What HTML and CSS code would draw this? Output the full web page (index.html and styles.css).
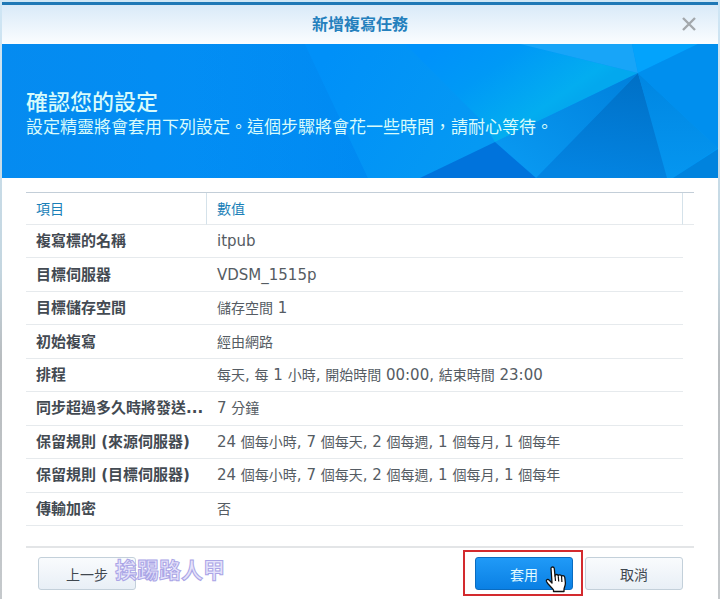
FILE: index.html
```html
<!DOCTYPE html>
<html lang="zh-Hant">
<head>
  <meta charset="UTF-8" />
  <meta name="viewport" content="width=device-width, initial-scale=1" />
  <title>新增複寫任務</title>
  <link rel="stylesheet" href="styles.css">
</head>
<body>
  <div class="dialog">
    <header class="titlebar">
      <h1>新增複寫任務</h1>
      <button type="button" class="close" aria-label="關閉">
        <svg width="16" height="14" viewBox="0 0 16 14">
          <path d="M2 1l12 12M14 1L2 13" fill="none" stroke="#a3a8ac" stroke-width="2.4" />
        </svg>
      </button>
    </header>

    <section class="banner">
      <svg class="facets" viewBox="0 0 716 134" preserveAspectRatio="none" aria-hidden="true">
        <defs>
          <linearGradient id="base" x1="0" y1="0" x2="1" y2="0">
            <stop offset="0" stop-color="#058bf0" />
            <stop offset="0.55" stop-color="#0090f8" />
            <stop offset="1" stop-color="#0099f7" />
          </linearGradient>
          <linearGradient id="shade" x1="0" y1="0" x2="1" y2="0">
            <stop offset="0" stop-color="#007ee6" stop-opacity="0" />
            <stop offset="1" stop-color="#007ee6" stop-opacity="0.3" />
          </linearGradient>
          <linearGradient id="cyan" gradientUnits="userSpaceOnUse" x1="440" y1="0" x2="510" y2="100">
            <stop offset="0" stop-color="#0092fa" />
            <stop offset="0.4" stop-color="#0099f6" />
            <stop offset="0.9" stop-color="#03adf0" />
            <stop offset="1" stop-color="#03a8ee" />
          </linearGradient>
          <linearGradient id="blue" gradientUnits="userSpaceOnUse" x1="320" y1="20" x2="470" y2="110">
            <stop offset="0" stop-color="#0090f8" />
            <stop offset="1" stop-color="#0599f3" />
          </linearGradient>
          <linearGradient id="dark" x1="0.7" y1="0" x2="0.5" y2="1">
            <stop offset="0" stop-color="#0070c6" />
            <stop offset="1" stop-color="#0384e2" />
          </linearGradient>
          <linearGradient id="mid" x1="1" y1="0" x2="0" y2="1">
            <stop offset="0" stop-color="#0080dc" />
            <stop offset="1" stop-color="#0a9cf4" />
          </linearGradient>
          <linearGradient id="right" x1="0" y1="0" x2="0" y2="1">
            <stop offset="0" stop-color="#0086e2" />
            <stop offset="1" stop-color="#0596f0" />
          </linearGradient>
        </defs>
        <path fill="url(#base)" d="M0 0h716v134H0z" />
        <path fill="url(#shade)" d="M190 0h113l63 134H190z" />
        <path fill="url(#blue)" d="M303 0h117l90 95-92 39h-52z" />
        <path fill="url(#cyan)" d="M403 0h115l118 29-143 69-12-20z" />
        <path fill="#18a5f8" d="M518 0h112l6 29z" />
        <path fill="#03a3fc" d="M630 0h66l-60 29z" />
        <path fill="url(#mid)" d="M636 29L493 98l41 36z" />
        <path fill="#0073dc" d="M418 134l75-36 41 36z" />
        <path fill="url(#dark)" d="M636 29L534 134h133z" />
        <path fill="url(#right)" d="M636 29l80 75-45 30h-6z" />
        <path fill="#008fee" d="M636 29l60-29h20v104z" />
        <path fill="#0083de" d="M671 134l45-29v29z" />
      </svg>
      <h2>確認您的設定</h2>
      <p>設定精靈將會套用下列設定。這個步驟將會花一些時間，請耐心等待。</p>
    </section>

    <main class="content">
      <table>
        <thead>
          <tr>
            <th class="name" scope="col">項目</th>
            <th scope="col">數值</th>
            <td class="spacer"></td>
          </tr>
        </thead>
        <tbody>
          <tr><th scope="row">複寫標的名稱</th><td>itpub</td></tr>
          <tr><th scope="row">目標伺服器</th><td>VDSM_1515p</td></tr>
          <tr><th scope="row">目標儲存空間</th><td><span>儲存空間</span> 1</td></tr>
          <tr><th scope="row">初始複寫</th><td><span>經由網路</span></td></tr>
          <tr><th scope="row">排程</th><td><span>每天</span>, <span>每</span> 1 <span>小時</span>, <span>開始時間</span> 00:00, <span>結束時間</span> 23:00</td></tr>
          <tr><th scope="row">同步超過多久時將發送...</th><td>7 <span>分鐘</span></td></tr>
          <tr><th scope="row">保留規則 (來源伺服器)</th><td>24 <span>個每小時</span>, 7 <span>個每天</span>, 2 <span>個每週</span>, 1 <span>個每月</span>, 1 <span>個每年</span></td></tr>
          <tr><th scope="row">保留規則 (目標伺服器)</th><td>24 <span>個每小時</span>, 7 <span>個每天</span>, 2 <span>個每週</span>, 1 <span>個每月</span>, 1 <span>個每年</span></td></tr>
          <tr><th scope="row">傳輸加密</th><td><span>否</span></td></tr>
        </tbody>
      </table>
    </main>

    <footer class="actions">
      <div class="back">
        <button type="button" class="btn">上一步</button>
        <span class="watermark">挨踢路人甲</span>
      </div>
      <div class="apply">
        <button type="button" class="btn primary">套用</button>
        <svg class="pointer" width="24" height="27" viewBox="0 0 24 27" aria-hidden="true">
          <path d="M7 2.5C7 .5 10 .5 10.300 2.500L11 10c0-2 3-2 3.300 0 0-1.500 3-1.500 3.300.5 0-1.200 3-1.200 3.200 1l.6 5.500c.1 3-1.400 4.500-1.400 6.500v2H9.500v-1.500C8 21.500 4 19 2.500 15.500c-.8-2 1.500-2.800 2.800-1.300L8 17z" fill="#fff" stroke="#111" stroke-width="1.300" stroke-linejoin="round" />
          <path d="M11 9.500l.5 5.500M14.300 10.500l.4 5M17.600 11l.3 5" fill="none" stroke="#111" stroke-width="1.200" />
        </svg>
      </div>
      <button type="button" class="btn">取消</button>
    </footer>
  </div>
</body>
</html>
```
FILE: styles.css
```css
* {
  margin: 0;
  padding: 0;
  box-sizing: border-box;
}

body {
  min-height: 100vh;
  padding: 2px 2px 0;
  display: flex;
  background: linear-gradient(#cfe6f5, #c4d6e0 45%, #b8bcbf 60%, #c5c9cc);
  font-family: "DejaVu Sans", "Noto Sans CJK TC", sans-serif;
  font-size: 14px;
  color: #555c63;
}

.dialog {
  flex: 1;
  min-width: 0;
  background: #fff;
  border-top: 3px solid #1f78b6;
}

/* Title bar */
.titlebar {
  position: relative;
  height: 39px;
  display: flex;
  align-items: center;
  justify-content: center;
  background: linear-gradient(#d9eaf8, #fbfdff);
}

.titlebar h1 {
  font-size: 16px;
  line-height: 24px;
  font-weight: bold;
  color: #2480bd;
}

.close {
  position: absolute;
  top: 12px;
  right: 21px;
  display: flex;
  border: none;
  background: none;
  cursor: pointer;
}

/* Banner */
.banner {
  position: relative;
  height: 134px;
  padding: 42px 24px 0;
  color: #d8fbfb;
}

.facets {
  position: absolute;
  inset: 0;
  width: 100%;
  height: 100%;
}

.banner h2,
.banner p {
  position: relative;
  font-family: "Noto Sans CJK TC", sans-serif;
}

.banner h2 {
  font-size: 22px;
  line-height: 29px;
  font-weight: 500;
}

.banner p {
  font-size: 17px;
  line-height: 22px;
  font-weight: 400;
}

/* Settings summary */
.content {
  padding: 14px 24px 0;
}

table {
  width: 100%;
  height: 334px;
  border-collapse: separate;
  border-spacing: 0;
  border-top: 1px solid #c3ced8;
  table-layout: fixed;
}

th,
td {
  padding: 0 10px;
  line-height: 20px;
  text-align: left;
  white-space: nowrap;
  border-bottom: 1px solid #e6eaed;
}

thead th,
thead td {
  height: 32px;
  font-weight: normal;
  color: #1a7fb8;
  border-right: 1px solid #d5e2ea;
}

.name {
  width: 181px;
}

thead .spacer {
  width: 11px;
  padding: 0;
  border-right: none;
}

tbody th {
  overflow: hidden;
  padding-right: 0;
  font-size: 15px;
  color: #434a52;
}

tbody td {
  font-size: 15px;
}

tbody td span {
  font-size: 14px;
}

/* Buttons */
.actions {
  margin: 20px 24px 0;
  padding: 9px 11px 8px 12px;
  display: flex;
  gap: 12px;
  border-top: 2px solid #e3e5e7;
}

.back {
  position: relative;
  margin-right: auto;
}

.apply {
  position: relative;
}

.apply::after {
  content: "";
  position: absolute;
  inset: -7px -10px -6px -12px;
  border: 2px solid #d32a2e;
  pointer-events: none;
}

.btn {
  width: 98px;
  height: 33px;
  border: 1px solid #c3d0da;
  border-radius: 3px;
  background: linear-gradient(#f9fbfd, #e8eff6);
  font: inherit;
  color: #3f474f;
  cursor: pointer;
}

.primary {
  border-color: #0a6cc0;
  background: linear-gradient(#209af7, #0a80e4);
  color: #e2fbff;
}

.pointer {
  position: absolute;
  top: 9px;
  left: 69px;
}

.watermark {
  position: absolute;
  top: -1px;
  left: 77px;
  font-size: 22px;
  line-height: 30px;
  font-weight: bold;
  white-space: nowrap;
  color: #e6e3fb;
  -webkit-text-stroke: 1px #aaa5e6;
  pointer-events: none;
}
```
